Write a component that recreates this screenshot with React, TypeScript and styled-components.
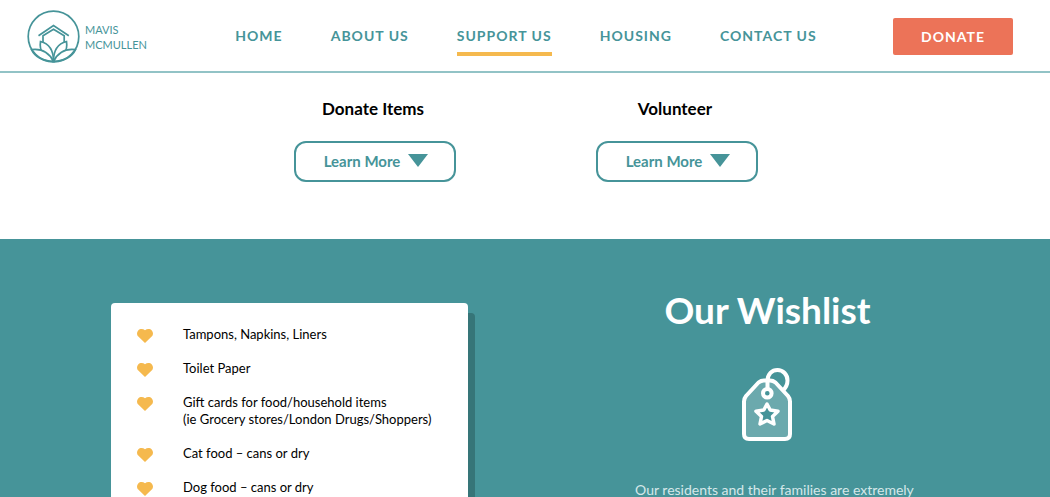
import React from "react";
import styled, { createGlobalStyle } from "styled-components";

const teal = "#469499";
const gold = "#f5b94e";

const GlobalStyle = createGlobalStyle`
  *, *::before, *::after { box-sizing: border-box; }
  body {
    margin: 0;
    background: #ffffff;
    color: #000000;
    font-family: Lato, "Open Sans", sans-serif;
  }
  h1, h2, p, ul { margin: 0; padding: 0; }
`;

const Header = styled.header`
  display: flex;
  align-items: center;
  height: 73px;
  padding: 2px 37px 0 27px;
  border-bottom: 2px solid #92c3c6;
`;

const Brand = styled.a`
  display: flex;
  align-items: center;
  gap: 5px;
  color: ${teal};
  font-size: 11px;
  line-height: 15px;
  text-decoration: none;
`;

const Nav = styled.nav`
  display: flex;
  flex: 1;
  justify-content: center;
  gap: 48px;
  padding-left: 12px;
`;

const NavLink = styled.a<{ $active?: boolean }>`
  padding: 10px 0 7px;
  border-bottom: 4px solid ${(p) => (p.$active ? gold : "transparent")};
  color: ${teal};
  font-size: 14px;
  font-weight: 700;
  line-height: 18px;
  letter-spacing: 1px;
  white-space: nowrap;
  text-decoration: none;
`;

const DonateButton = styled.button`
  width: 120px;
  height: 37px;
  border: 0;
  border-radius: 2px;
  background: #ec7358;
  color: #ffffff;
  font: inherit;
  font-size: 14px;
  font-weight: 700;
  letter-spacing: 1px;
`;

const Options = styled.section`
  display: flex;
  justify-content: center;
  gap: 140px;
  padding: 24px 0 57px 2px;
`;

const Option = styled.div`
  display: flex;
  flex-direction: column;
  align-items: center;
  gap: 20px;
`;

const OptionTitle = styled.h2`
  padding-right: 4px;
  font-size: 17px;
  font-weight: 700;
  line-height: 24px;
`;

const LearnButton = styled.button`
  display: flex;
  align-items: center;
  justify-content: center;
  gap: 8px;
  width: 162px;
  height: 41px;
  padding: 0 0 2px 2px;
  border: 2px solid ${teal};
  border-radius: 12px;
  background: #ffffff;
  color: ${teal};
  font: inherit;
  font-size: 15px;
  font-weight: 700;
`;

const Wishlist = styled.section`
  display: grid;
  grid-template-columns: 18fr 17fr;
  column-gap: 131px;
  align-items: start;
  padding: 64px 114px 48px 111px;
  background: ${teal};
`;

const Card = styled.ul`
  display: flex;
  flex-direction: column;
  gap: 17px;
  padding: 23px 26px 32px;
  border-radius: 4px;
  background: #ffffff;
  box-shadow: 7px 10px 0 #367578;
  list-style: none;
`;

const Item = styled.li`
  display: flex;
  align-items: flex-start;
  gap: 30px;
  font-size: 13px;
  line-height: 17px;
  white-space: pre-line;

  svg { flex: none; margin-top: 3px; }
`;

const Intro = styled.div`
  display: flex;
  flex-direction: column;
  align-items: center;
  color: #ffffff;
  text-align: center;

  svg { margin: 36px 0 38px; }
`;

const IntroTitle = styled.h1`
  margin-top: -15px;
  font-size: 37px;
  font-weight: 700;
  line-height: 44px;
  white-space: nowrap;
`;

const IntroText = styled.p`
  padding-left: 14px;
  color: #d5e8e9;
  font-size: 14px;
  line-height: 20px;
`;

const Logo = () => (
  <svg width="53" height="53" viewBox="0 0 53 53" fill="none" stroke={teal} strokeWidth="1.7" aria-hidden="true">
    <path d="M11.5 25.7 26.500 15.500 41.800 25.700" />
    <path d="M16 33V25.700L26.500 19.200 37.200 25.700V33" />
    <path fill="#ffffff" d="M26.500 51C17 48.500 12 41 13.500 31.500C21.500 33.500 26.500 40 26.500 51Z" />
    <path fill="#ffffff" d="M26.500 51C36 48.500 41 41 39.500 31.500C31.500 33.500 26.500 40 26.500 51Z" />
    <path fill="#ffffff" d="M26.500 51.500C22 42.500 14 38.500 4.500 39.700C8 47 16 51 26.500 51.500Z" />
    <path fill="#ffffff" d="M26.500 51.500C31 42.500 39 38.500 48.500 39.700C45 47 37 51 26.500 51.500Z" />
    <circle cx="26.5" cy="26.5" r="25.3" />
  </svg>
);

const Triangle = () => (
  <svg width="20" height="13" viewBox="0 0 20 13" fill={teal} aria-hidden="true">
    <path d="M0 0H20L10 13Z" />
  </svg>
);

const Heart = () => (
  <svg width="16" height="14" viewBox="0 0 16 14" fill={gold} aria-hidden="true">
    <path d="M8 14 1.300 7.600C-.4 5.900-.4 3 1.200 1.400 3-.4 6-.4 8 1.300 10-.4 13-.4 14.800 1.400 16.400 3 16.400 5.900 14.700 7.600Z" />
  </svg>
);

const Tag = () => (
  <svg width="52" height="74" viewBox="0 0 52 74" fill="none" stroke="#ffffff" strokeWidth="4" strokeLinejoin="round" aria-hidden="true">
    <path fill="#6ba9ad" d="M17.500 14.500Q20 12.500 23 12.500H29Q32 12.500 34.500 14.500L47 28Q49 30.500 49 33.500V66Q49 71 44 71H8Q3 71 3 66V33.500Q3 30.500 5 28Z" />
    <path d="M26.500 22V13C26.500 6 31 2 36.500 2C42 2 46.500 6.500 46.500 12.500C46.500 17 44.500 20 42 22.500" />
    <circle cx="26.300" cy="25.300" r="4.300" fill={teal} />
    <path strokeWidth="3.500" fill={teal} d="M26 36 29.200 42 37 43.300 31.500 48.500 33 56 26 52.500 19 56 20.500 48.500 15 43.300 22.800 42Z" />
  </svg>
);

const links = ["HOME", "ABOUT US", "SUPPORT US", "HOUSING", "CONTACT US"];
const options = ["Donate Items", "Volunteer"];
const wishes = [
  "Tampons, Napkins, Liners",
  "Toilet Paper",
  "Gift cards for food/household items\n(ie Grocery stores/London Drugs/Shoppers)",
  "Cat food – cans or dry",
  "Dog food – cans or dry",
];

export default function App() {
  return (
    <>
      <GlobalStyle />
      <Header>
        <Brand href="#">
          <Logo />
          <span>
            MAVIS
            <br />
            MCMULLEN
          </span>
        </Brand>
        <Nav>
          {links.map((label) => (
            <NavLink key={label} href="#" $active={label === "SUPPORT US"}>
              {label}
            </NavLink>
          ))}
        </Nav>
        <DonateButton type="button">DONATE</DonateButton>
      </Header>
      <main>
        <Options>
          {options.map((title) => (
            <Option key={title}>
              <OptionTitle>{title}</OptionTitle>
              <LearnButton type="button">
                Learn More
                <Triangle />
              </LearnButton>
            </Option>
          ))}
        </Options>
        <Wishlist>
          <Card>
            {wishes.map((wish) => (
              <Item key={wish}>
                <Heart />
                <span>{wish}</span>
              </Item>
            ))}
          </Card>
          <Intro>
            <IntroTitle>Our Wishlist</IntroTitle>
            <Tag />
            <IntroText>Our residents and their families are extremely</IntroText>
          </Intro>
        </Wishlist>
      </main>
    </>
  );
}
